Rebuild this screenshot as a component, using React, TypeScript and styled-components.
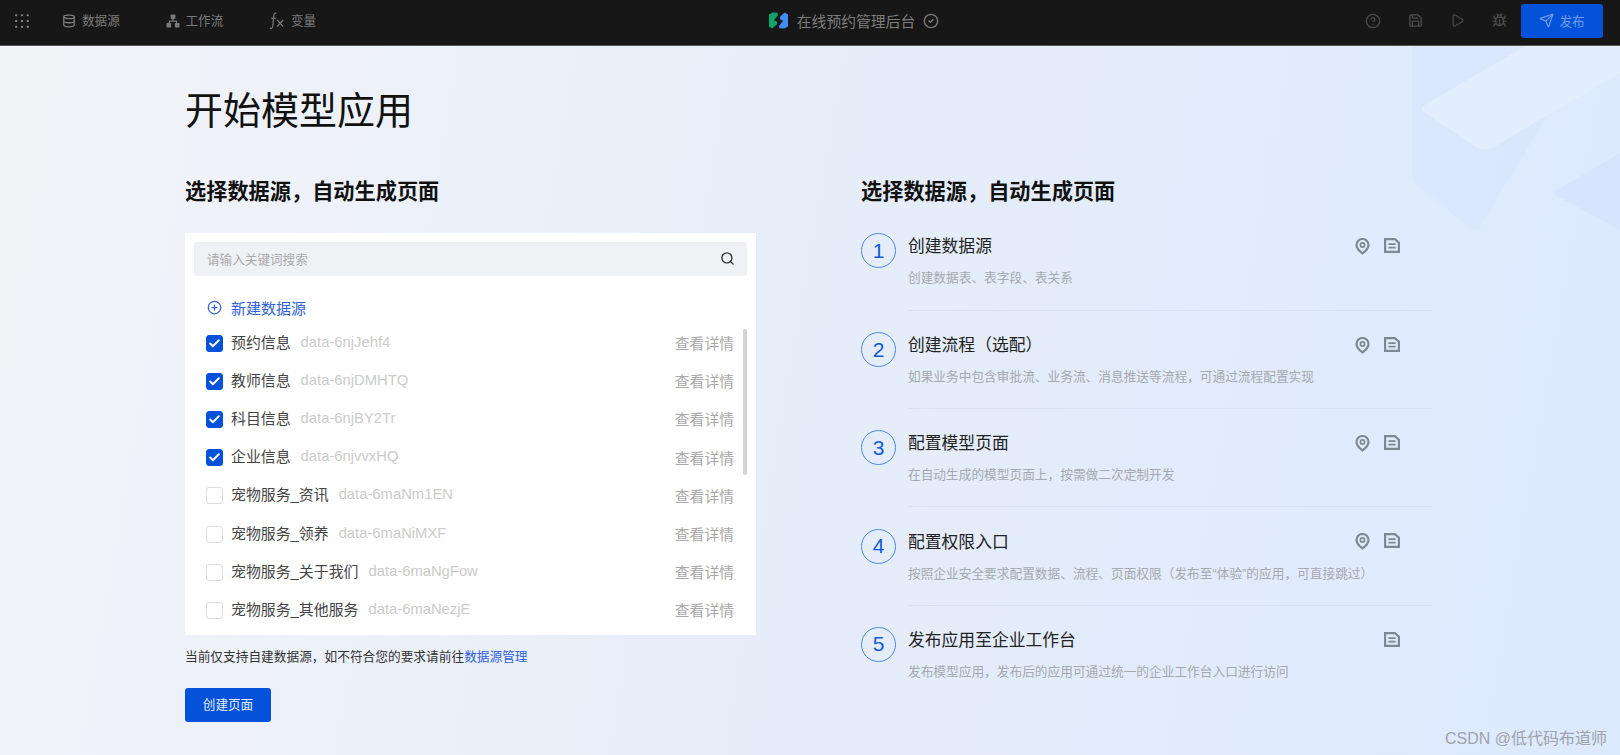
import React from "react";
import styled, { createGlobalStyle } from "styled-components";
import { Database, CircleHelp, Save, Play, Bug, Send, Search, CirclePlus, CircleCheck, Check } from "lucide-react";

const Global = createGlobalStyle`
  html, body { margin: 0; padding: 0; height: 100%; overflow: hidden; }
  body { font-family: "Liberation Sans", "Noto Sans CJK SC", sans-serif; }
  * { box-sizing: border-box; }
`;

const Page = styled.div`
  position: relative;
  width: 1620px;
  height: 755px;
  overflow: hidden;
  display: flex;
  flex-direction: column;
  background: linear-gradient(100deg, #f3f4f8 0%, #e6edf9 50%, #dce9fe 100%);
`;

const Header = styled.header`
  height: 46px;
  flex: none;
  padding-bottom: 4px;
  background: #171717;
  border-bottom: 1px solid #555;
  display: grid;
  grid-template-columns: 1fr auto 1fr;
  align-items: center;
  position: relative;
  z-index: 1;
`;

const HeaderLeft = styled.nav`
  display: flex;
  align-items: center;
  padding-left: 15px;
`;

const GridButton = styled.span`
  display: flex;
  margin-right: 33px;
  color: #8b8b8b;
`;

const NavItem = styled.a`
  display: flex;
  align-items: center;
  gap: 6px;
  width: 103.5px;
  color: #7b7b7b;
  font-size: 12.6px;
  line-height: 20px;
`;

const HeaderCenter = styled.div`
  display: flex;
  align-items: center;
  gap: 8px;
  padding-left: 87px;
  color: #7d7d7d;
  font-size: 14.8px;
`;

const HeaderRight = styled.div`
  display: flex;
  align-items: center;
  justify-content: flex-end;
  padding-right: 17px;
  color: #4a4a4a;
`;

const ToolIcon = styled.span`
  display: flex;
  width: 42px;
  justify-content: center;
`;

const PublishButton = styled.button`
  margin-left: 1px;
  width: 82px;
  height: 34px;
  border: 0;
  border-radius: 3px;
  background: #0352d9;
  color: #6f9ce8;
  font: inherit;
  font-size: 12.6px;
  display: flex;
  align-items: center;
  justify-content: center;
  gap: 5px;
`;

const Deco = styled.svg`
  position: absolute;
  left: 1380px;
  top: 45px;
  pointer-events: none;
`;

const Main = styled.main`
  position: relative;
  flex: 1;
  padding: 39px 0 0 185px;
`;

const Title = styled.h1`
  margin: 0 0 40px;
  font-weight: 400;
  font-size: 38px;
  line-height: 52px;
  color: #111;
`;

const Columns = styled.div`
  display: grid;
  grid-template-columns: 571px 572px;
  column-gap: 105px;
`;

const SectionTitle = styled.h2`
  margin: 0 0 26px;
  font-size: 21.2px;
  line-height: 30px;
  font-weight: 700;
  color: #111;
`;

const Panel = styled.div`
  position: relative;
  height: 402px;
  background: #fff;
  padding: 9px 9px 0 9px;
  overflow: hidden;
`;

const SearchBox = styled.div`
  height: 34px;
  border-radius: 3px;
  background: #f0f1f4;
  display: flex;
  align-items: center;
  justify-content: space-between;
  padding: 0 12px 2px 13px;
  color: #aaa;
  font-size: 12.6px;
`;

const SearchIcon = styled(Search)`
  color: #333;
`;

const NewSource = styled.div`
  display: flex;
  align-items: center;
  gap: 9px;
  margin: 20px 0 1px 13px;
  height: 22px;
  color: #2f62dc;
  font-size: 15px;
`;

const List = styled.ul`
  list-style: none;
  margin: 6px 0 0;
  padding: 0 0 0 12px;
`;

const Row = styled.li`
  height: 38.2px;
  display: flex;
  align-items: center;
  padding-right: 13px;
`;

const Box = styled.span<{ $on: boolean }>`
  width: 17px;
  height: 17px;
  flex: none;
  border-radius: 3px;
  margin-right: 8px;
  display: flex;
  align-items: center;
  justify-content: center;
  color: #fff;
  background: ${(p) => (p.$on ? "#0352d9" : "#fff")};
  border: 1px solid ${(p) => (p.$on ? "#0352d9" : "#dcdcdc")};
`;

const RowName = styled.span`
  font-size: 14.9px;
  color: #444;
  margin-right: 10px;
  padding-bottom: 4px;
`;

const RowId = styled.span`
  font-size: 14.8px;
  color: #cbcbcb;
  flex: 1;
  padding-bottom: 3px;
`;

const RowLink = styled.span`
  font-size: 14.8px;
  color: #a8a8a8;
  padding-bottom: 1px;
`;

const Scrollbar = styled.span`
  position: absolute;
  left: 558px;
  top: 96px;
  width: 4px;
  height: 146px;
  border-radius: 2px;
  background: #d4d4d4;
`;

const Note = styled.p`
  margin: 13px 0 0;
  font-size: 12.7px;
  line-height: 18px;
  color: #333;
`;

const NoteLink = styled.a`
  color: #2f62dc;
`;

const CreateButton = styled.button`
  display: block;
  margin-top: 22px;
  width: 86px;
  height: 34px;
  padding: 0 0 3px;
  border: 0;
  border-radius: 3px;
  background: #0352d9;
  color: #e6eefc;
  font: inherit;
  font-size: 12.6px;
`;

const Steps = styled.ol`
  list-style: none;
  margin: 1px 0 0;
  padding: 0;
`;

const StepBadge = styled.span`
  width: 35px;
  height: 35px;
  border-radius: 50%;
  border: 1px solid #4f86ea;
  color: #0f5ae0;
  font-size: 21px;
  display: flex;
  align-items: center;
  justify-content: center;
`;

const StepBody = styled.div<{ $last?: boolean }>`
  height: 77px;
  border-bottom: 1px solid ${(p) => (p.$last ? "transparent" : "#d9e2f2")};
`;

const Step = styled.li`
  height: 98.2px;
  display: grid;
  grid-template-columns: 47px 1fr;

  &:first-child {
    height: 99.2px;
  }

  &:first-child ${StepBody} {
    height: 78px;
  }
`;

const StepHead = styled.div`
  display: flex;
  align-items: center;
  justify-content: space-between;
  height: 24px;
`;

const StepTitle = styled.span`
  font-size: 16.8px;
  color: #222;
`;

const StepIcons = styled.span`
  display: flex;
  gap: 14px;
  width: 90px;
  margin-top: 2px;
  justify-content: flex-end;
  padding-right: 33px;
  color: #7f8790;
`;

const StepDesc = styled.div`
  margin-top: 12px;
  font-size: 12.7px;
  line-height: 18px;
  color: #a6a9af;
`;

const Watermark = styled.span`
  position: absolute;
  right: 13px;
  bottom: 5px;
  font-size: 16px;
  line-height: 22px;
  color: #a0a3a9;
`;

const Dots = () => (
  <svg width="14" height="14" viewBox="0 0 14 14" fill="currentColor">
    {[1.2, 7, 12.8].flatMap((y) => [1.2, 7, 12.8].map((x) => <rect key={`${x}-${y}`} x={x - 1} y={y - 1} width="2" height="2" rx="0.6" />))}
  </svg>
);

const FlowIcon = () => (
  <svg width="14" height="14" viewBox="0 0 14 14" fill="currentColor">
    <rect x="4.6" y="0.5" width="4.8" height="4.6" rx="0.8" />
    <rect x="0.5" y="9" width="4.6" height="4.6" rx="0.8" />
    <rect x="8.9" y="9" width="4.6" height="4.6" rx="0.8" />
    <path d="M6.4 5h1.2v1.5h3.6v2.6H10V7.7H4v1.4H2.8V6.5h3.6z" />
  </svg>
);

const FxIcon = () => (
  <svg width="16" height="18" viewBox="0 0 16 18" fill="none" stroke="currentColor" strokeWidth="1.2">
    <path d="M7.4 1.2C5.6.8 5 1.8 4.8 3.4L3.8 14c-.2 1.7-1 2.6-2.8 2.2" />
    <path d="M2.2 6.2h5" />
    <path d="M8.2 8l6 6.6M14.2 8l-6 6.6" />
  </svg>
);

const Logo = () => (
  <svg width="21" height="17" viewBox="0 0 21 17">
    <path d="M1 2.6 4.8.6 9.6.8 9.8 3.4 5.8 8.2l3.4 1.6-.4 2.8-4.6 3.8L1 14.4z" fill="#0fa56a" />
    <path d="M20 14.4 16.2 16.4 11.4 16.2 11.2 13.6l4-4.8-3.4-1.6.4-2.8L16.8.6 20 2.6z" fill="#3f8cf4" />
  </svg>
);

const PinIcon = () => (
  <svg width="15" height="17" viewBox="0 0 15 17" fill="none">
    <path d="M7.5 15.4C4.2 13 1.5 10.2 1.5 7A6 6 0 0 1 13.5 7c0 3.2-2.7 6-6 8.4z" stroke="currentColor" strokeWidth="2.2" />
    <circle cx="7.5" cy="7" r="2.1" stroke="currentColor" strokeWidth="1.7" />
  </svg>
);

const DocIcon = () => (
  <svg width="16" height="15" viewBox="0 0 16 15" fill="none" stroke="currentColor">
    <path d="M1.1 1.1h9.8l4 3.6v9.2H1.1z" strokeWidth="2.2" />
    <path d="M4.4 6.2h7.2M4.4 9.6h7.2" strokeWidth="1.7" />
  </svg>
);

const rows = [
  { name: "预约信息", id: "data-6njJehf4", on: true },
  { name: "教师信息", id: "data-6njDMHTQ", on: true },
  { name: "科目信息", id: "data-6njBY2Tr", on: true },
  { name: "企业信息", id: "data-6njvvxHQ", on: true },
  { name: "宠物服务_资讯", id: "data-6maNm1EN", on: false },
  { name: "宠物服务_领养", id: "data-6maNiMXF", on: false },
  { name: "宠物服务_关于我们", id: "data-6maNgFow", on: false },
  { name: "宠物服务_其他服务", id: "data-6maNezjE", on: false },
];

const steps = [
  { title: "创建数据源", desc: "创建数据表、表字段、表关系", pin: true },
  { title: "创建流程（选配）", desc: "如果业务中包含审批流、业务流、消息推送等流程，可通过流程配置实现", pin: true },
  { title: "配置模型页面", desc: "在自动生成的模型页面上，按需做二次定制开发", pin: true },
  { title: "配置权限入口", desc: "按照企业安全要求配置数据、流程、页面权限（发布至“体验”的应用，可直接跳过）", pin: true },
  { title: "发布应用至企业工作台", desc: "发布模型应用，发布后的应用可通过统一的企业工作台入口进行访问", pin: false },
];

export default function App() {
  return (
    <Page>
      <Global />
      <Header>
        <HeaderLeft>
          <GridButton><Dots /></GridButton>
          <NavItem><Database size={14} strokeWidth={2.2} />数据源</NavItem>
          <NavItem><FlowIcon />工作流</NavItem>
          <NavItem><FxIcon />变量</NavItem>
        </HeaderLeft>
        <HeaderCenter>
          <Logo />
          在线预约管理后台
          <CircleCheck size={16} />
        </HeaderCenter>
        <HeaderRight>
          <ToolIcon><CircleHelp size={16} /></ToolIcon>
          <ToolIcon><Save size={15} strokeWidth={2.2} /></ToolIcon>
          <ToolIcon><Play size={15} /></ToolIcon>
          <ToolIcon><Bug size={15} strokeWidth={2.2} /></ToolIcon>
          <PublishButton><Send size={15} />发布</PublishButton>
        </HeaderRight>
      </Header>
      <Deco width="240" height="200" viewBox="1380 45 240 200">
        <path d="M1412 45V175q0 8 8 12l50 41q7 4 11-3L1590 45z" fill="#d3e3fc" opacity="0.4" />
        <path d="M1527 45 1426 104q-8 5 0 10l50 33q8 5 16 1l58-34 70-41V45z" fill="#e3edfe" opacity="0.85" />
        <path d="M1552 193 1620 153V230z" fill="#d3e3fc" opacity="0.75" />
      </Deco>
      <Main>
        <Title>开始模型应用</Title>
        <Columns>
          <section>
            <SectionTitle>选择数据源，自动生成页面</SectionTitle>
            <Panel>
              <SearchBox>
                请输入关键词搜索
                <SearchIcon size={15} strokeWidth={2.2} />
              </SearchBox>
              <NewSource><CirclePlus size={15} />新建数据源</NewSource>
              <List>
                {rows.map((r) => (
                  <Row key={r.id}>
                    <Box $on={r.on}>{r.on && <Check size={13} strokeWidth={3.5} />}</Box>
                    <RowName>{r.name}</RowName>
                    <RowId>{r.id}</RowId>
                    <RowLink>查看详情</RowLink>
                  </Row>
                ))}
              </List>
              <Scrollbar />
            </Panel>
            <Note>当前仅支持自建数据源，如不符合您的要求请前往<NoteLink>数据源管理</NoteLink></Note>
            <CreateButton>创建页面</CreateButton>
          </section>
          <section>
            <SectionTitle>选择数据源，自动生成页面</SectionTitle>
            <Steps>
              {steps.map((s, i) => (
                <Step key={s.title}>
                  <StepBadge>{i + 1}</StepBadge>
                  <StepBody $last={i === steps.length - 1}>
                    <StepHead>
                      <StepTitle>{s.title}</StepTitle>
                      <StepIcons>{s.pin && <PinIcon />}<DocIcon /></StepIcons>
                    </StepHead>
                    <StepDesc>{s.desc}</StepDesc>
                  </StepBody>
                </Step>
              ))}
            </Steps>
          </section>
        </Columns>
        <Watermark>CSDN @低代码布道师</Watermark>
      </Main>
    </Page>
  );
}
